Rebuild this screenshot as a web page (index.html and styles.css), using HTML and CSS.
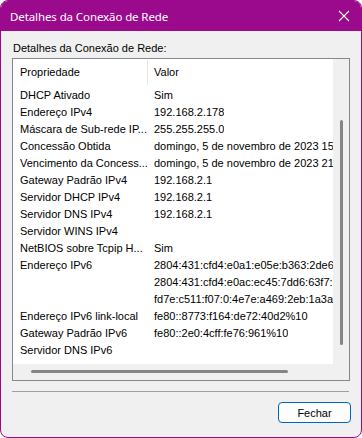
FILE: index.html
```html
<!DOCTYPE html>
<html>
  <head>
    <link rel="stylesheet" href="styles.css">
  </head>
  <body>
    <div class="window">
      <div class="titlebar">
        <span class="title">Detalhes da Conexão de Rede</span>
        <svg class="close" width="12" height="12" viewBox="0 0 12 12">
          <path d="M1 1 L11 11 M11 1 L1 11" stroke="#fff" stroke-width="1.1" fill="none"/>
        </svg>
      </div>
      <div class="content">
        <div class="caption">Detalhes da Conexão de Rede:</div>
        <div class="listbox">
          <div class="list-main">
            <div class="list-inner">
              <div class="row header">
                <span class="col-prop">Propriedade</span>
                <span class="col-val">Valor</span>
              </div>
              <div id="rows"></div>
            </div>
            <div class="hscroll"><div class="hthumb"></div></div>
          </div>
          <div class="vscroll">
            <div class="vthumb"></div>
          </div>
        </div>
        <div class="separator"></div>
        <div class="footer">
          <button class="btn">Fechar</button>
        </div>
      </div>
    </div>

    <script>
      const details = [
        ["DHCP Ativado", "Sim"],
        ["Endereço IPv4", "192.168.2.178"],
        ["Máscara de Sub-rede IP...", "255.255.255.0"],
        ["Concessão Obtida", "domingo, 5 de novembro de 2023 15:32:10"],
        ["Vencimento da Concess...", "domingo, 5 de novembro de 2023 21:32:10"],
        ["Gateway Padrão IPv4", "192.168.2.1"],
        ["Servidor DHCP IPv4", "192.168.2.1"],
        ["Servidor DNS IPv4", "192.168.2.1"],
        ["Servidor WINS IPv4", ""],
        ["NetBIOS sobre Tcpip H...", "Sim"],
        ["Endereço IPv6", "2804:431:cfd4:e0a1:e05e:b363:2de6:9f01"],
        ["", "2804:431:cfd4:e0ac:ec45:7dd6:63f7:1b2c"],
        ["", "fd7e:c511:f07:0:4e7e:a469:2eb:1a3a"],
        ["Endereço IPv6 link-local", "fe80::8773:f164:de72:40d2%10"],
        ["Gateway Padrão IPv6", "fe80::2e0:4cff:fe76:961%10"],
        ["Servidor DNS IPv6", ""],
      ];

      let html = "";
      details.forEach(([prop, val]) => {
        html += `<div class="row"><span class="col-prop">${prop}</span><span class="col-val">${val}</span></div>`;
      });
      document.getElementById("rows").innerHTML = html;
    </script>
  </body>
</html>
```

FILE: styles.css
```css
html, body {
  margin: 0;
  padding: 0;
}
body {
  width: 362px;
  height: 438px;
  background: #ffffff;
  font-family: "Liberation Sans", Arial, sans-serif;
  font-size: 11px;
  color: #000;
}
.window {
  box-sizing: border-box;
  width: 362px;
  height: 438px;
  border: 1px solid #9b0a8c;
  border-radius: 8px;
  overflow: hidden;
  background: #f0f0f0;
  display: flex;
  flex-direction: column;
}
.titlebar {
  height: 30px;
  background: #9b0a8c;
  display: flex;
  align-items: center;
  justify-content: space-between;
  padding: 0 10px 0 9px;
  flex-shrink: 0;
}
.title {
  color: #fff;
  font-family: "Noto Sans", "Open Sans", sans-serif;
  font-size: 11.5px;
  letter-spacing: -0.1px;
}
.close {
  display: block;
  margin-right: 1px;
}
.content {
  flex: 1;
  padding: 10px 11px 0 11px;
  display: flex;
  flex-direction: column;
}
.caption {
  height: 17px;
  line-height: 15px;
  padding-left: 1px;
}
.listbox {
  box-sizing: border-box;
  height: 323px;
  border: 1px solid #828790;
  display: flex;
}
.list-main {
  flex: 1;
  display: flex;
  flex-direction: column;
  overflow: hidden;
}
.list-inner {
  flex: 1;
  background: #fff;
  overflow: hidden;
}
.row {
  display: flex;
  height: 17px;
  line-height: 17px;
  white-space: nowrap;
}
.row.header {
  height: 27px;
  line-height: 27px;
  margin-bottom: 1px;
}
.col-prop {
  box-sizing: border-box;
  width: 135px;
  padding-left: 7px;
  flex-shrink: 0;
  overflow: hidden;
}
.col-val {
  padding-left: 6px;
  overflow: hidden;
}
.header .col-prop {
  border-right: 1px solid #e5e5e5;
  height: 25px;
  margin-top: 1px;
  line-height: 25px;
}
.hscroll {
  height: 16px;
  background: #f0f0f0;
  position: relative;
  flex-shrink: 0;
}
.hthumb {
  position: absolute;
  left: 18px;
  top: 6px;
  width: 257px;
  height: 3px;
  border-radius: 2px;
  background: #858585;
}
.vscroll {
  width: 16px;
  background: #f0f0f0;
  position: relative;
  flex-shrink: 0;
}
.vthumb {
  position: absolute;
  left: 7px;
  top: 61px;
  width: 3px;
  height: 225px;
  border-radius: 2px;
  background: #858585;
}
.separator {
  height: 1px;
  background: #a0a0a0;
  margin: 10px 1px 0 0;
}
.footer {
  display: flex;
  justify-content: flex-end;
  padding-top: 10px;
}
.btn {
  box-sizing: border-box;
  width: 73px;
  height: 21px;
  border: 1px solid #0067c0;
  border-radius: 4px;
  background: #fdfdfd;
  font-family: "Liberation Sans", Arial, sans-serif;
  font-size: 11px;
  color: #000;
  padding: 0;
  margin-right: -1px;
}
```
